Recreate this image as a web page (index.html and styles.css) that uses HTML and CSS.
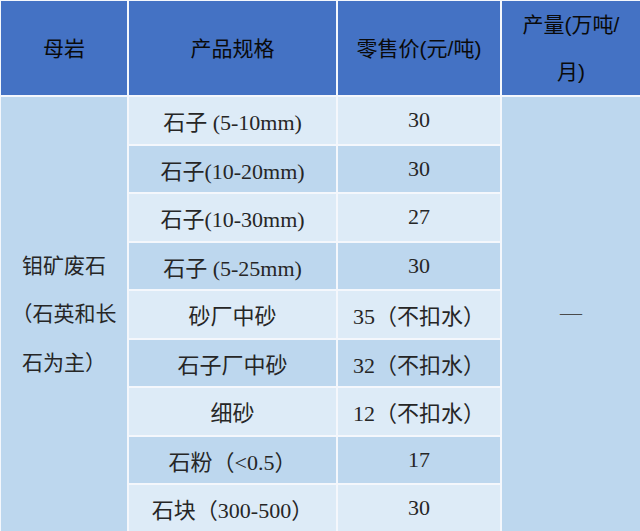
FILE: index.html
```html
<!DOCTYPE html>
<html lang="zh-CN">
<head>
<meta charset="utf-8">
<title>钼矿废石产品价格</title>
<link rel="stylesheet" href="styles.css">
</head>
<body>
<div class="sheet">
  <div class="hd">母岩</div>
  <div class="hd">产品规格</div>
  <div class="hd">零售价(元/吨)</div>
  <div class="hd hd-two">产量(万吨/<br>月)</div>

  <div class="rock">钼矿废石<br>（石英和长<br>石为主）</div>
  <div class="output">—</div>

  <div class="cell light">石子 (5-10mm)</div>
  <div class="cell light">30</div>
  <div class="cell dark">石子(10-20mm)</div>
  <div class="cell dark">30</div>
  <div class="cell light">石子(10-30mm)</div>
  <div class="cell light">27</div>
  <div class="cell dark">石子 (5-25mm)</div>
  <div class="cell dark">30</div>
  <div class="cell light">砂厂中砂</div>
  <div class="cell light">35（不扣水）</div>
  <div class="cell dark">石子厂中砂</div>
  <div class="cell dark">32（不扣水）</div>
  <div class="cell light">细砂</div>
  <div class="cell light">12（不扣水）</div>
  <div class="cell dark">石粉（&lt;0.5）</div>
  <div class="cell dark">17</div>
  <div class="cell light">石块（300-500）</div>
  <div class="cell light">30</div>
</div>
</body>
</html>
```

FILE: styles.css
```css
html, body {
  margin: 0;
  padding: 0;
  overflow: hidden;
  background: #ffffff;
}

.sheet {
  display: grid;
  grid-template-columns: 126px 207px 162px 1fr;
  grid-template-rows: 94px repeat(9, 46.5px);
  gap: 2px;
  padding: 1px 0 0 1px;
  width: 640px;
  box-sizing: border-box;
  background: #f4f7fc;
}

.hd {
  background: #4472c4;
  color: #0a0a0a;
  font-family: "Liberation Sans", "Noto Sans CJK SC", sans-serif;
  font-size: 21px;
  display: flex;
  align-items: center;
  justify-content: center;
  text-align: center;
  line-height: 47px;
}

.cell,
.rock,
.output {
  font-family: "Liberation Serif", "Noto Sans CJK SC", serif;
  font-size: 22px;
  letter-spacing: 0;
  color: #262626;
  display: flex;
  align-items: center;
  justify-content: center;
  text-align: center;
  white-space: nowrap;
}

.light {
  background: #ddebf7;
}

.dark {
  background: #bdd7ee;
}

.rock {
  grid-column: 1;
  grid-row: 2 / span 9;
  background: #bdd7ee;
  line-height: 48.5px;
  font-size: 21px;
}

.output {
  grid-column: 4;
  grid-row: 2 / span 9;
  background: #bdd7ee;
  color: #4a4a4a;
  padding-bottom: 2px;
}
```
